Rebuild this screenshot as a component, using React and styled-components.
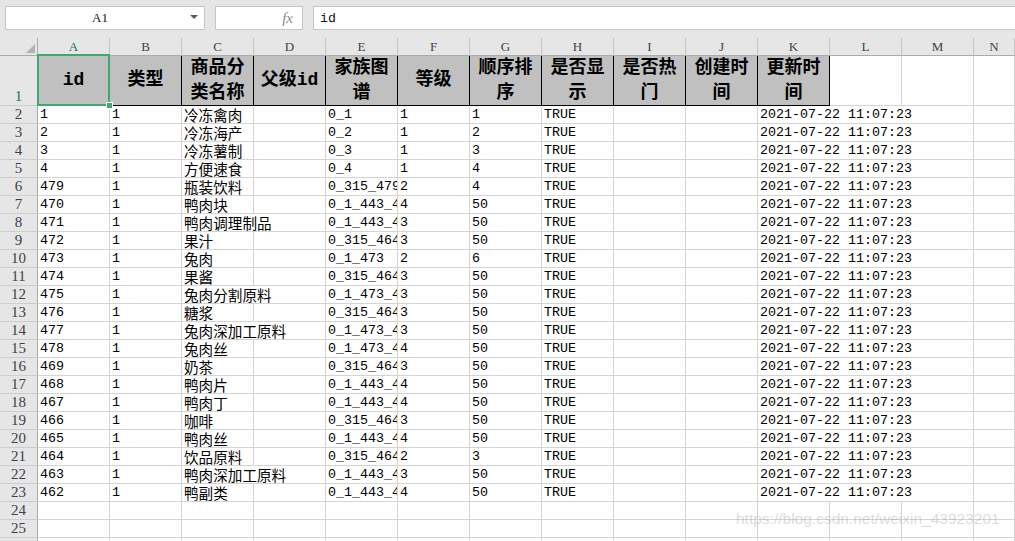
import React from 'react';
import styled, { createGlobalStyle } from 'styled-components';

const GlobalStyle = createGlobalStyle`
  html, body { margin: 0; padding: 0; background: #ffffff; overflow: hidden; }
  * { box-sizing: border-box; }
`;

const GREEN = '#3fa86c';
const GRID = '#d4d4d4';
const HEAD_BG = '#e6e6e6';

const Page = styled.div`
  position: relative;
  width: 1015px;
  height: 541px;
  overflow: hidden;
  display: flex;
  flex-direction: column;
  background: #fff;
`;

const FormulaBar = styled.div`
  height: 38px;
  flex: none;
  display: flex;
  align-items: flex-start;
  padding-top: 6px;
  padding-left: 5px;
  gap: 10px;
  background: ${HEAD_BG};
`;

const Box = styled.div`
  height: 24px;
  background: #fff;
  border: 1px solid #c6c6c6;
  display: flex;
  align-items: center;
`;

const NameBox = styled(Box)`
  width: 200px;
  padding: 0 6px 0 0;
  font-family: "Liberation Serif", "DejaVu Serif", serif;
  font-size: 13px;
  color: #222;
`;

const NameText = styled.span`
  flex: 1;
  text-align: center;
  padding-left: 4px;
`;

const Arrow = styled.span`
  width: 0;
  height: 0;
  border-left: 4px solid transparent;
  border-right: 4px solid transparent;
  border-top: 4px solid #5c5c5c;
  margin-top: -2px;
`;

const FxBox = styled(Box)`
  width: 88px;
  justify-content: flex-end;
  padding-right: 9px;
  font-family: "Liberation Serif", "DejaVu Serif", serif;
  font-style: italic;
  font-size: 15px;
  color: #8a8a8a;
`;

const FormulaInput = styled(Box)`
  flex: 1;
  border-right: none;
  padding-left: 6px;
  font-family: "Liberation Mono", monospace;
  font-size: 13.3px;
  color: #111;
`;

const Sheet = styled.div`
  position: relative;
  display: grid;
  grid-template-columns: 38px repeat(13, 72px) 1fr;
  grid-template-rows: 18px 50px;
  grid-auto-rows: 18px;
  background: #fff;
`;

const Corner = styled.div`
  position: relative;
  background: ${HEAD_BG};
  border-right: 1px solid #ababab;
  border-bottom: 1px solid #ababab;
`;

const CornerTri = styled.span`
  position: absolute;
  right: 2px;
  bottom: 2px;
  width: 0;
  height: 0;
  border-left: 9px solid transparent;
  border-bottom: 9px solid #b2b2b2;
`;

const ColHeader = styled.div`
  background: ${HEAD_BG};
  border-right: 1px solid #c4c4c4;
  border-bottom: 1px solid #ababab;
  display: flex;
  align-items: center;
  justify-content: center;
  font-family: "Liberation Serif", "DejaVu Serif", serif;
  font-size: 13px;
  color: ${(p) => (p.$active ? '#217346' : '#3f3f4a')};
`;

const RowHeader = styled.div`
  background: ${HEAD_BG};
  border-right: 1px solid #ababab;
  border-bottom: 1px solid #cdcdcd;
  display: flex;
  align-items: flex-end;
  justify-content: center;
  padding-bottom: 1px;
  font-family: "Liberation Serif", "DejaVu Serif", serif;
  font-size: 15px;
  line-height: 16px;
  color: ${(p) => (p.$active ? '#217346' : '#3f3f4a')};
`;

const HeadCell = styled.div`
  background: ${(p) => (p.$empty ? '#fff' : '#c0c0c0')};
  border-right: 1px solid ${(p) => (p.$empty ? GRID : '#000')};
  border-bottom: 1px solid ${(p) => (p.$empty ? GRID : '#000')};
  display: flex;
  align-items: center;
  justify-content: center;
  text-align: center;
  padding: 0 1px;
  font-family: "Liberation Mono", "Noto Sans CJK SC", monospace;
  font-weight: bold;
  font-size: 18px;
  line-height: 25px;
  color: #000;
`;

const Cell = styled.div`
  grid-column: span ${(p) => p.$span || 1};
  border-right: 1px solid ${GRID};
  border-bottom: 1px solid ${GRID};
  padding: 0 2px;
  overflow-x: clip;
  overflow-y: visible;
  white-space: nowrap;
  display: flex;
  align-items: center;
  font-family: "Liberation Mono", "Noto Sans CJK SC", monospace;
  font-size: 13.33px;
  line-height: 16px;
  color: #000;
`;

const Han = styled.span`
  font-family: "Noto Sans CJK SC", sans-serif;
  font-size: 14.6px;
  line-height: 16px;
`;

const Selection = styled.div`
  position: absolute;
  left: 37px;
  top: 16px;
  width: 73px;
  height: 52px;
  border: 2px solid ${GREEN};
  pointer-events: none;
`;

const Handle = styled.span`
  position: absolute;
  right: -5px;
  bottom: -5px;
  width: 7px;
  height: 7px;
  background: ${GREEN};
  border: 1px solid #fff;
`;

const Watermark = styled.div`
  position: absolute;
  left: 736px;
  top: 510px;
  font-family: "Liberation Sans", Arial, sans-serif;
  font-size: 15.5px;
  color: rgba(150, 150, 150, 0.35);
  white-space: nowrap;
  pointer-events: none;
`;

const COLS = ['A', 'B', 'C', 'D', 'E', 'F', 'G', 'H', 'I', 'J', 'K', 'L', 'M', 'N'];
const HEADERS = ['id', '类型', '商品分类名称', '父级id', '家族图谱', '等级', '顺序排序', '是否显示', '是否热门', '创建时间', '更新时间'];

const DATA = [
  ['1', '冷冻禽肉', '0_1', '1', '1'],
  ['2', '冷冻海产', '0_2', '1', '2'],
  ['3', '冷冻薯制', '0_3', '1', '3'],
  ['4', '方便速食', '0_4', '1', '4'],
  ['479', '瓶装饮料', '0_315_479', '2', '4'],
  ['470', '鸭肉块', '0_1_443_447', '4', '50'],
  ['471', '鸭肉调理制品', '0_1_443_448', '3', '50'],
  ['472', '果汁', '0_315_464', '3', '50'],
  ['473', '兔肉', '0_1_473', '2', '6'],
  ['474', '果酱', '0_315_464', '3', '50'],
  ['475', '兔肉分割原料', '0_1_473_475', '3', '50'],
  ['476', '糖浆', '0_315_464', '3', '50'],
  ['477', '兔肉深加工原料', '0_1_473_475', '3', '50'],
  ['478', '兔肉丝', '0_1_473_477', '4', '50'],
  ['469', '奶茶', '0_315_464', '3', '50'],
  ['468', '鸭肉片', '0_1_443_447', '4', '50'],
  ['467', '鸭肉丁', '0_1_443_447', '4', '50'],
  ['466', '咖啡', '0_315_464', '3', '50'],
  ['465', '鸭肉丝', '0_1_443_447', '4', '50'],
  ['464', '饮品原料', '0_315_464', '2', '3'],
  ['463', '鸭肉深加工原料', '0_1_443_448', '3', '50'],
  ['462', '鸭副类', '0_1_443_447', '4', '50'],
];

const DATE = '2021-07-22 11:07:23';

function DataRow({ n, row }) {
  const [id, name, tree, level, order] = row;
  const longName = name.length > 4;
  return (
    <>
      <RowHeader>{n}</RowHeader>
      <Cell>{id}</Cell>
      <Cell>1</Cell>
      <Cell $span={longName ? 2 : 1}>
        <Han>{name}</Han>
      </Cell>
      {!longName && <Cell />}
      <Cell>{tree}</Cell>
      <Cell>{level}</Cell>
      <Cell>{order}</Cell>
      <Cell>TRUE</Cell>
      <Cell />
      <Cell />
      <Cell $span={3}>{DATE}</Cell>
      <Cell />
    </>
  );
}

function EmptyRow({ n }) {
  return (
    <>
      <RowHeader>{n}</RowHeader>
      {COLS.map((c) => (
        <Cell key={c} />
      ))}
    </>
  );
}

export default function App() {
  return (
    <Page>
      <GlobalStyle />
      <FormulaBar>
        <NameBox>
          <NameText>A1</NameText>
          <Arrow />
        </NameBox>
        <FxBox>fx</FxBox>
        <FormulaInput>id</FormulaInput>
      </FormulaBar>
      <Sheet>
        <Corner>
          <CornerTri />
        </Corner>
        {COLS.map((c) => (
          <ColHeader key={c} $active={c === 'A'}>
            {c}
          </ColHeader>
        ))}
        <RowHeader $active>1</RowHeader>
        {COLS.map((c, i) => (
          <HeadCell key={c} $empty={i >= HEADERS.length}>
            {HEADERS[i] || ''}
          </HeadCell>
        ))}
        {DATA.map((row, i) => (
          <DataRow key={i} n={i + 2} row={row} />
        ))}
        {[24, 25, 26].map((n) => (
          <EmptyRow key={n} n={n} />
        ))}
        <Selection>
          <Handle />
        </Selection>
      </Sheet>
      <Watermark>https://blog.csdn.net/weixin_43923201</Watermark>
    </Page>
  );
}
